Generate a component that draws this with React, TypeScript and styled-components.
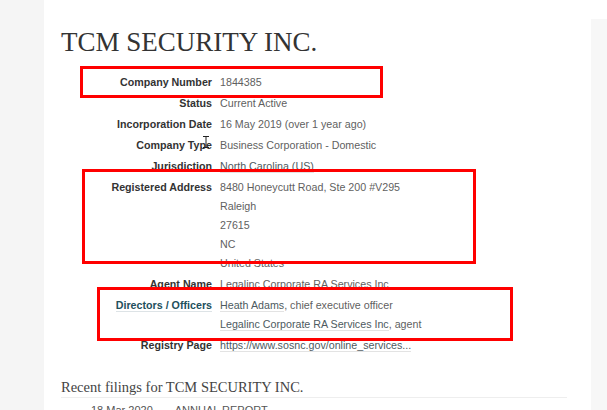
import React from "react";
import styled, { createGlobalStyle } from "styled-components";

const Global = createGlobalStyle`
  html, body { margin: 0; padding: 0; overflow: hidden; background: #ffffff; }
  body { font-family: "Liberation Sans", Arial, sans-serif; }
`;

const Page = styled.div`
  position: relative;
  display: flex;
  width: 607px;
  height: 410px;
  overflow: hidden;
  background: #ffffff;
`;

const LeftGutter = styled.div`
  width: 44px;
  flex: none;
  background: #f5f5f5;
`;

const Main = styled.div`
  flex: 1;
  display: flex;
  flex-direction: column;
  padding-top: 5px;
`;

const TopRule = styled.div`
  margin-left: 17px;
  height: 2px;
  background: #eeeeee;
`;

const Body = styled.div`
  flex: 1;
  display: flex;
`;

const Content = styled.div`
  flex: 1;
  padding-left: 17px;
  padding-right: 20px;
`;

const Sidebar = styled.div`
  width: 16px;
  flex: none;
  margin-top: 14px;
  background: #f7f7f7;
`;

const Title = styled.h1`
  margin: 20px 0 0;
  font-family: "Liberation Serif", "Times New Roman", serif;
  font-weight: 400;
  font-size: 27px;
  line-height: 34px;
  color: #333333;
`;

const Details = styled.dl`
  display: grid;
  grid-template-columns: 151px 1fr;
  column-gap: 8px;
  row-gap: 2px;
  margin: 14px 0 0;
  font-size: 10.7px;
  line-height: 19px;
`;

const Label = styled.dt<{ $link?: boolean }>`
  text-align: right;
  font-weight: 700;
  color: ${(p) => (p.$link ? "#234f5c" : "#333333")};
  white-space: nowrap;
`;

const LabelLink = styled.span`
  border-bottom: 1px solid #dde3e6;
`;

const Value = styled.dd`
  margin: 0;
  color: #5f5f5f;
  display: flex;
  flex-direction: column;
`;

const Line = styled.span`
  white-space: nowrap;
`;

const Link = styled.span`
  color: #4d5a60;
  border-bottom: 1px solid #e3e3e3;
`;

const SectionTitle = styled.h2`
  margin: 22px 4px 0 0;
  font-family: "Liberation Serif", "Times New Roman", serif;
  font-weight: 400;
  font-size: 14.5px;
  line-height: 20px;
  color: #444444;
  padding-bottom: 0;
  border-bottom: 1px solid #eeeeee;
`;

const FilingRow = styled.div`
  display: flex;
  gap: 22px;
  margin: 4px 0 0 30px;
  font-size: 11px;
  line-height: 16px;
  color: #555555;
`;

const FilingType = styled.span`
  text-transform: uppercase;
`;

const Annotation = styled.div<{ $l: number; $t: number; $w: number; $h: number }>`
  position: absolute;
  left: ${(p) => p.$l}px;
  top: ${(p) => p.$t}px;
  width: ${(p) => p.$w}px;
  height: ${(p) => p.$h}px;
  box-sizing: border-box;
  border: 3px solid #ff0000;
  pointer-events: none;
`;

const Cursor = styled.svg`
  position: absolute;
  left: 202px;
  top: 136px;
`;

type Part = { text: string; link?: boolean };
type Row = { label: string; labelLink?: boolean; lines: Part[][] };

const rows: Row[] = [
  { label: "Company Number", lines: [[{ text: "1844385" }]] },
  { label: "Status", lines: [[{ text: "Current Active" }]] },
  { label: "Incorporation Date", lines: [[{ text: "16 May 2019 (over 1 year ago)" }]] },
  { label: "Company Type", lines: [[{ text: "Business Corporation - Domestic" }]] },
  { label: "Jurisdiction", lines: [[{ text: "North Carolina (US)", link: true }]] },
  {
    label: "Registered Address",
    lines: [
      [{ text: "8480 Honeycutt Road, Ste 200 #V295" }],
      [{ text: "Raleigh" }],
      [{ text: "27615" }],
      [{ text: "NC" }],
      [{ text: "United States" }],
    ],
  },
  { label: "Agent Name", lines: [[{ text: "Legalinc Corporate RA Services Inc" }]] },
  {
    label: "Directors / Officers",
    labelLink: true,
    lines: [
      [{ text: "Heath Adams", link: true }, { text: ", chief executive officer" }],
      [{ text: "Legalinc Corporate RA Services Inc", link: true }, { text: ", agent" }],
    ],
  },
  {
    label: "Registry Page",
    lines: [[{ text: "https://www.sosnc.gov/online_services...", link: true }]],
  },
];

export default function App() {
  return (
    <>
      <Global />
      <Page>
        <LeftGutter />
        <Main>
          <TopRule />
          <Body>
            <Content>
              <Title>TCM SECURITY INC.</Title>
              <Details>
                {rows.map((r) => (
                  <React.Fragment key={r.label}>
                    <Label $link={r.labelLink}>
                      {r.labelLink ? <LabelLink>{r.label}</LabelLink> : r.label}
                    </Label>
                    <Value>
                      {r.lines.map((parts, i) => (
                        <Line key={i}>
                          {parts.map((p, j) =>
                            p.link ? <Link key={j}>{p.text}</Link> : <span key={j}>{p.text}</span>
                          )}
                        </Line>
                      ))}
                    </Value>
                  </React.Fragment>
                ))}
              </Details>
              <SectionTitle>Recent filings for TCM SECURITY INC.</SectionTitle>
              <FilingRow>
                <span>18 Mar 2020</span>
                <FilingType>Annual Report</FilingType>
              </FilingRow>
            </Content>
            <Sidebar />
          </Body>
        </Main>
        <Annotation $l={80} $t={66} $w={303} $h={32} />
        <Annotation $l={82} $t={169} $w={394} $h={95} />
        <Annotation $l={97} $t={287} $w={416} $h={54} />
        <Cursor width="8" height="12" viewBox="0 0 8 12">
          <path d="M1 0.5h6M4 0.5v11M1 11.5h6" stroke="#222" strokeWidth="1" fill="none" />
        </Cursor>
      </Page>
    </>
  );
}
